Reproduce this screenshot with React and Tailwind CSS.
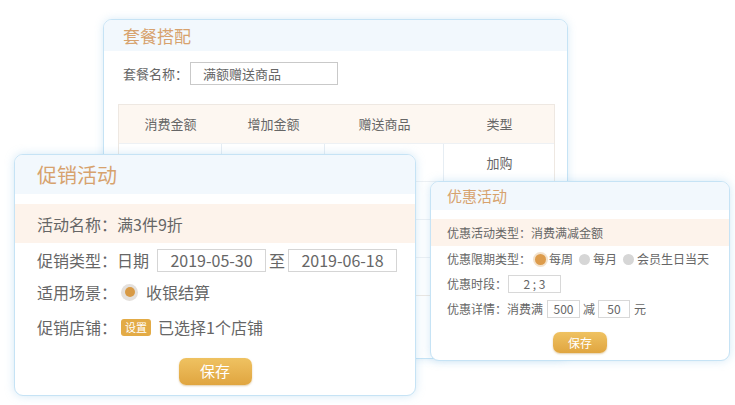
const font = { fontFamily: '"Noto Sans CJK SC", "Microsoft YaHei", sans-serif' };

function Radio({ on, big }) {
  if (big) {
    return (
      <span className="inline-flex items-center justify-center w-[17px] h-[17px] rounded-full bg-[#e4e0dc]">
        <span className="w-[10px] h-[10px] rounded-full bg-[#d89a45]" />
      </span>
    );
  }
  return (
    <span
      className={`inline-block w-[11px] h-[11px] rounded-full ${
        on ? "bg-[#dd9c4c] ring-2 ring-[#f3e2cc]" : "bg-[#d6d6d6]"
      }`}
    />
  );
}

function SaveButton({ small }) {
  return (
    <button
      className={`mx-auto block rounded-[7px] bg-gradient-to-b from-[#efc261] to-[#e0a53f] text-white shadow-[0_1px_2px_rgba(180,130,40,0.4)] ${
        small ? "w-[54px] h-[21px] text-[12px]" : "w-[73px] h-[27px] text-[15px]"
      }`}
    >
      保存
    </button>
  );
}

export default function App() {
  const heads = ["消费金额", "增加金额", "赠送商品", "类型"];
  const cols = "grid grid-cols-[103px_103px_119px_111px]";

  return (
    <div className="relative w-[735px] h-[405px] bg-white overflow-hidden text-[#666]" style={font}>
      {/* 套餐搭配 */}
      <div className="absolute left-[103px] top-[19px] w-[465px] h-[340px] rounded-[9px] border border-[#c6e3f5] bg-white shadow-[0_0_8px_rgba(130,190,230,0.3)] overflow-hidden">
        <div className="h-[31px] bg-[#f2f8fd] pl-[19px] flex items-center text-[17px] text-[#d7a26d]">
          套餐搭配
        </div>
        <div className="mt-[11px] pl-[19px] flex items-center h-[23px] text-[13px]">
          <span>套餐名称：</span>
          <span className="ml-[2px] w-[148px] h-[23px] border border-[#c9c9c9] pl-[12px] flex items-center">
            满额赠送商品
          </span>
        </div>
        <div className="ml-[14px] mt-[19px] w-[437px] border border-[#eee8e2] text-[13px]">
          <div className={`${cols} h-[38px] bg-[#fdf7f1]`}>
            {heads.map((h) => (
              <div key={h} className="flex items-center justify-center">
                {h}
              </div>
            ))}
          </div>
          {[0, 1, 2, 3].map((r) => (
            <div key={r} className={`${cols} h-[38px] border-t border-[#eef1f4]`}>
              {[0, 1, 2, 3].map((c) => (
                <div
                  key={c}
                  className={`flex items-center justify-center ${c < 3 ? "border-r border-[#e6edf3]" : ""}`}
                >
                  {c === 3 && r === 0 ? "加购" : ""}
                </div>
              ))}
            </div>
          ))}
        </div>
      </div>

      {/* 促销活动 */}
      <div className="absolute left-[14px] top-[154px] w-[402px] h-[242px] rounded-[9px] border border-[#c6e3f5] bg-white shadow-[0_0_10px_rgba(130,190,230,0.35)] overflow-hidden">
        <div className="h-[39px] bg-[#f2f8fd] pl-[22px] flex items-center text-[20px] text-[#d7a26d]">
          促销活动
        </div>
        <div className="mt-[10px] h-[39px] bg-[#fdf3eb] pl-[22px] flex items-center text-[16px]">
          活动名称：满3件9折
        </div>
        <div className="mt-[3px] h-[28px] pl-[22px] flex items-center text-[16px]">
          <span>促销类型：日期</span>
          <span className="ml-[8px] w-[109px] h-[23px] border border-[#d5d5d5] flex items-center justify-center text-[16px]">
            2019-05-30
          </span>
          <span className="mx-[3px]">至</span>
          <span className="w-[109px] h-[23px] border border-[#d5d5d5] flex items-center justify-center text-[16px]">
            2019-06-18
          </span>
        </div>
        <div className="h-[36px] pl-[22px] flex items-center text-[16px]">
          <span>适用场景：</span>
          <span className="ml-[4px] mr-[8px] flex">
            <Radio big />
          </span>
          <span>收银结算</span>
        </div>
        <div className="h-[34px] pl-[22px] flex items-center text-[16px]">
          <span>促销店铺：</span>
          <span className="ml-[4px] mr-[7px] w-[30px] h-[17px] rounded-[3px] bg-[#e3ab46] text-white text-[11px] flex items-center justify-center">
            设置
          </span>
          <span>已选择1个店铺</span>
        </div>
        <div className="mt-[14px]">
          <SaveButton />
        </div>
      </div>

      {/* 优惠活动 */}
      <div className="absolute left-[430px] top-[181px] w-[300px] h-[180px] rounded-[9px] border border-[#c6e3f5] bg-white shadow-[0_0_10px_rgba(130,190,230,0.35)] overflow-hidden text-[12px]">
        <div className="h-[28px] bg-[#f2f8fd] pl-[16px] flex items-center text-[15px] text-[#d7a26d]">
          优惠活动
        </div>
        <div className="mt-[9px] h-[27px] bg-[#fdf3eb] pl-[16px] flex items-center">
          优惠活动类型：消费满减金额
        </div>
        <div className="h-[26px] pl-[16px] flex items-center">
          <span>优惠限期类型：</span>
          <span className="ml-[4px] mr-[3px] flex">
            <Radio on />
          </span>
          <span>每周</span>
          <span className="ml-[6px] mr-[3px] flex">
            <Radio />
          </span>
          <span>每月</span>
          <span className="ml-[6px] mr-[3px] flex">
            <Radio />
          </span>
          <span>会员生日当天</span>
        </div>
        <div className="h-[23px] pl-[16px] flex items-center">
          <span>优惠时段：</span>
          <span className="ml-[1px] w-[53px] h-[18px] border border-[#d8d8d8] flex items-center justify-center">
            2 ; 3
          </span>
        </div>
        <div className="h-[27px] pl-[16px] flex items-center">
          <span>优惠详情：消费满</span>
          <span className="ml-[4px] w-[33px] h-[18px] border border-[#d8d8d8] flex items-center justify-center">
            500
          </span>
          <span className="mx-[3px]">减</span>
          <span className="w-[32px] h-[18px] border border-[#d8d8d8] flex items-center justify-center">
            50
          </span>
          <span className="ml-[4px]">元</span>
        </div>
        <div className="mt-[10px]">
          <SaveButton small />
        </div>
      </div>
    </div>
  );
}
